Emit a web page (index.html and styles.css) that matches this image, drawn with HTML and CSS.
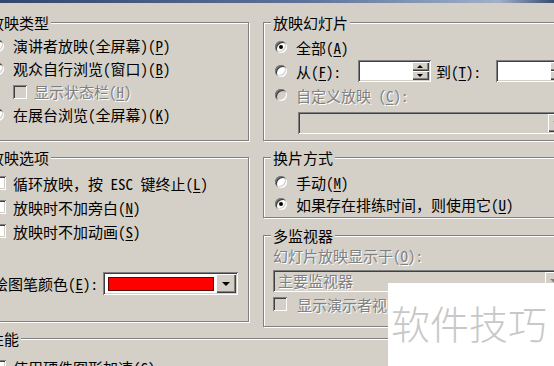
FILE: index.html
```html
<!DOCTYPE html>
<html lang="zh-CN">
<head>
<meta charset="utf-8">
<title>设置放映方式</title>
<link rel="stylesheet" href="styles.css">
</head>
<body>
<div class="titlebar"></div>
<div class="dialog">
  <div class="cols">
    <fieldset class="group g-type">
      <legend>放映类型</legend>
      <div class="row pl12"><span class="radio on"></span>演讲者放映(全屏幕)(<u>P</u>)</div>
      <div class="row pl12"><span class="radio"></span>观众自行浏览(窗口)(<u>B</u>)</div>
      <div class="row pl33 disabled"><span class="check"></span>显示状态栏(<u>H</u>)</div>
      <div class="row pl12"><span class="radio"></span>在展台浏览(全屏幕)(<u>K</u>)</div>
    </fieldset>

    <fieldset class="group g-slides">
      <legend>放映幻灯片</legend>
      <div class="row r24 pl11"><span class="radio on"></span>全部(<u>A</u>)</div>
      <div class="row r24 pl11"><span class="radio"></span>从(<u>F</u>):
        <span class="spin sunken s1"><span class="spin-field"></span><span class="spin-btns"><span class="sb up"></span><span class="sb down"></span></span></span>
        <span class="to">到(<u>T</u>):</span>
        <span class="spin sunken s2"><span class="spin-field"></span><span class="spin-btns"><span class="sb up"></span><span class="sb down"></span></span></span>
      </div>
      <div class="row r24 pl11 disabled"><span class="radio"></span>自定义放映 (<u>C</u>):</div>
      <div class="combo sunken c1"><span class="combo-text"></span><span class="combo-btn off"></span></div>
    </fieldset>

    <fieldset class="group g-opts">
      <legend>放映选项</legend>
      <div class="row r24 pl12"><span class="check"></span>循环放映，按 ESC 键终止(<u>L</u>)</div>
      <div class="row r24 pl12"><span class="check"></span>放映时不加旁白(<u>N</u>)</div>
      <div class="row r24 pl12"><span class="check"></span>放映时不加动画(<u>S</u>)</div>
      <div class="row color-row">绘图笔颜色(<u>E</u>):
        <span class="picker sunken"><span class="swatch"></span><span class="combo-btn"></span></span>
      </div>
    </fieldset>

    <fieldset class="group g-switch">
      <legend>换片方式</legend>
      <div class="row r22 pl11"><span class="radio"></span>手动(<u>M</u>)</div>
      <div class="row r22 pl11"><span class="radio on"></span>如果存在排练时间，则使用它(<u>U</u>)</div>
    </fieldset>

    <fieldset class="group g-multi">
      <legend>多监视器</legend>
      <div class="row r22 pl9 disabled">幻灯片放映显示于(<u>O</u>):</div>
      <div class="combo sunken c2"><span class="combo-text disabled">主要监视器</span><span class="combo-btn off"></span></div>
      <div class="row r22 pl9 disabled presenter"><span class="check"></span>显示演示者视图(<u>W</u>)</div>
    </fieldset>
  </div>

  <fieldset class="group g-perf">
    <legend>性能</legend>
    <div class="row r24 pl12"><span class="check"></span>使用硬件图形加速(<u>G</u>)</div>
  </fieldset>
</div>
<div class="watermark">软件技巧</div>
</body>
</html>
```

FILE: styles.css
```css
html, body {
  margin: 0;
  height: 100%;
  overflow: hidden;
  background: #d4d0c8;
}
body {
  position: relative;
  font-family: "Noto Sans Mono CJK SC", "Noto Sans CJK SC", "DejaVu Sans", sans-serif;
  font-size: 15px;
  color: #000;
}
u { text-decoration-thickness: 1px; text-underline-offset: 2px; }

.titlebar {
  height: 3px;
  background: linear-gradient(90deg, #33466d 0%, #5d729a 55%, #9fb0c8 90%, #3a4c70 100%);
}

.dialog {
  margin-left: -21px;
  width: 599px;
  padding-top: 11px;
}
.cols {
  display: grid;
  grid-template-columns: 270px 315px;
  column-gap: 14px;
  row-gap: 8px;
  align-items: start;
}

.group {
  margin: 0;
  padding: 0;
  min-width: 0;
  border: 1px solid #808080;
  box-shadow: 1px 1px 0 #fff, inset 1px 1px 0 #fff;
}
.group legend {
  margin-left: 7px;
  padding: 0 2px;
  height: 17px;
  line-height: 17px;
  background: #d4d0c8;
}

.g-type { grid-column: 1; grid-row: 1; align-self: stretch; padding-top: 3px; }
.g-slides { grid-column: 2; grid-row: 1; align-self: stretch; padding: 4px 0 6px; }
.g-opts { grid-column: 1; grid-row: 2 / span 2; padding: 5px 0 26px; }
.g-switch { grid-column: 2; grid-row: 2; padding: 5px 0 2px; }
.g-multi { grid-column: 2; grid-row: 3; margin-top: 1px; padding: 0 0 11px; }
.g-perf { margin-top: 3px; padding-top: 8px; height: 60px; }

.row {
  display: flex;
  align-items: center;
  height: 23px;
  white-space: nowrap;
}
.r24 { height: 24px; }
.r22 { height: 22px; }
.pl9 { padding-left: 9px; }
.pl11 { padding-left: 11px; }
.pl12 { padding-left: 12px; }
.pl33 { padding-left: 33px; }

.disabled {
  color: #808080;
  text-shadow: 1px 1px 0 #fff;
}

.radio {
  position: relative;
  flex: none;
  width: 12px;
  height: 12px;
  margin-right: 9px;
  border-radius: 50%;
  background: #fff;
  box-shadow: inset 1px 1px 0 #808080, inset -1px -1px 0 #fff, inset 2px 2px 0 #404040, inset -2px -2px 0 #d4d0c8;
}
.radio.on::after {
  content: "";
  position: absolute;
  left: 4px;
  top: 4px;
  width: 4px;
  height: 4px;
  border-radius: 50%;
  background: #000;
}
.disabled .radio { background: #d4d0c8; }

.check {
  flex: none;
  width: 14px;
  height: 14px;
  margin-right: 7px;
  background: #fff;
  box-shadow: inset 1px 1px 0 #808080, inset -1px -1px 0 #fff, inset 2px 2px 0 #404040, inset -2px -2px 0 #d4d0c8;
}
.disabled .check { background: #d4d0c8; }
.presenter .check { margin-right: 10px; }

.sunken {
  box-shadow: inset 1px 1px 0 #808080, inset -1px -1px 0 #fff, inset 2px 2px 0 #404040, inset -2px -2px 0 #d4d0c8;
}

.spin {
  display: flex;
  box-sizing: border-box;
  width: 73px;
  height: 22px;
  padding: 2px;
  background: #fff;
}
.s1 { margin-left: 17px; }
.s2 { margin-left: 15px; }
.to { margin-left: 5px; }
.spin-field { flex: 1; }
.spin-btns {
  display: flex;
  flex-direction: column;
  width: 17px;
}
.sb {
  position: relative;
  flex: 1;
  background: #d4d0c8;
  box-shadow: inset 1px 1px 0 #fff, inset -1px -1px 0 #404040, inset -2px -2px 0 #808080;
}
.sb::after {
  content: "";
  position: absolute;
  left: 5px;
  border-left: 3px solid transparent;
  border-right: 3px solid transparent;
}
.sb.up::after { top: 3px; border-bottom: 3px solid #000; }
.sb.down::after { top: 3px; border-top: 3px solid #000; }

.combo {
  display: flex;
  box-sizing: border-box;
  height: 22px;
  padding: 2px;
  background: #d4d0c8;
}
.c1 { margin: 5px 0 0 34px; width: 269px; }
.c2 { margin: 4px 0 0 9px; width: 291px; }
.combo-text {
  flex: 1;
  padding-left: 3px;
  line-height: 18px;
  white-space: nowrap;
}
.combo-btn {
  position: relative;
  flex: none;
  width: 17px;
  background: #d4d0c8;
  box-shadow: inset 1px 1px 0 #fff, inset -1px -1px 0 #404040, inset -2px -2px 0 #808080;
}
.combo-btn::after {
  content: "";
  position: absolute;
  left: 50%;
  top: 50%;
  margin: -2px 0 0 -4px;
  border-left: 4px solid transparent;
  border-right: 4px solid transparent;
  border-top: 4px solid #000;
}
.combo-btn.off::after {
  border-top-color: #808080;
  filter: drop-shadow(1px 1px 0 #fff);
}
.presenter { margin-top: 1px; }

.color-row {
  margin-top: 29px;
  padding-left: 13px;
}
.picker {
  display: flex;
  box-sizing: border-box;
  width: 135px;
  height: 23px;
  margin-left: 5px;
  padding: 2px;
  background: #fff;
}
.swatch {
  flex: 1;
  margin: 3px 2px 2px 3px;
  background: #f00;
  border: 1px solid #6a0000;
}
.picker .combo-btn { width: 20px; }

.watermark {
  position: absolute;
  left: 388px;
  top: 283px;
  width: 163px;
  height: 83px;
  padding-left: 3px;
  background: #fff;
  color: #c8c8c8;
  font-family: "Noto Sans CJK SC", sans-serif;
  font-weight: 300;
  font-size: 39px;
  line-height: 78px;
  white-space: nowrap;
}
```
